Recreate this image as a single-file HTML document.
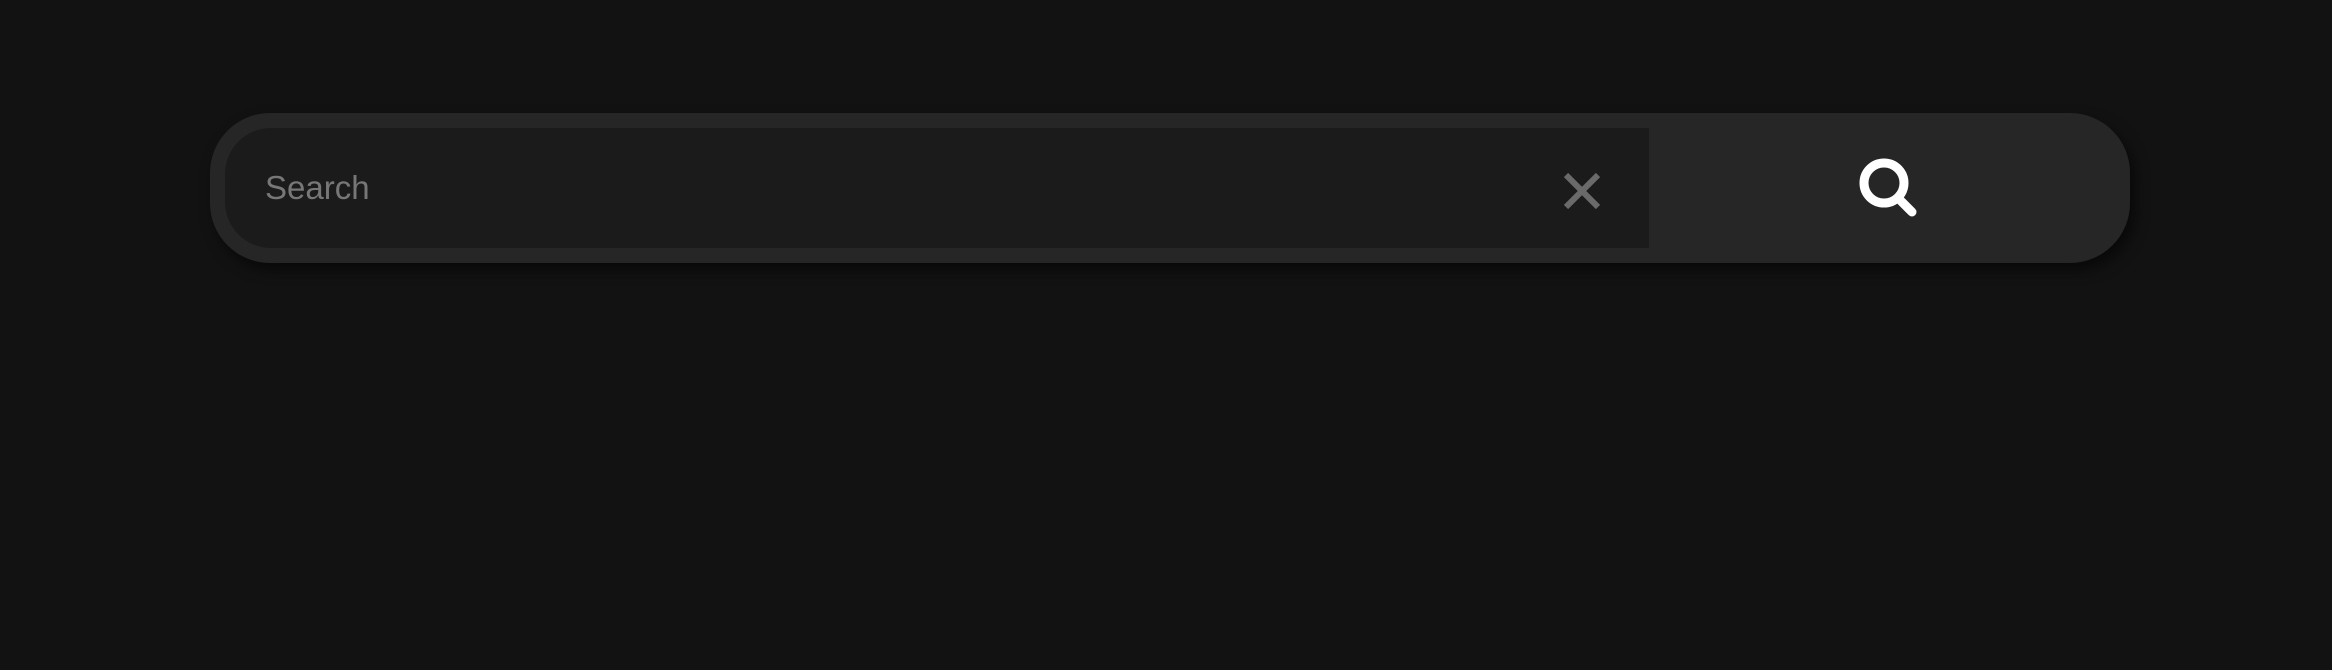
<!DOCTYPE html>
<html><head><style>
html,body{margin:0;padding:0;width:2332px;height:670px;background:#121212;overflow:hidden}
.outer{position:absolute;left:210px;top:113px;width:1920px;height:150px;background:#262626;border-radius:60px;box-shadow:5px 7px 14px rgba(0,0,0,0.55)}
.inner{position:absolute;left:15px;top:15px;width:1424px;height:120px;background:#1b1b1b;border-radius:46px 0 0 46px}
.txt{position:absolute;left:40px;top:0;font-family:"Liberation Sans",sans-serif;font-size:33px;line-height:120px;color:#777;}
svg{position:absolute}
</style></head><body>
<div class="outer">
 <div class="inner"><div class="txt">Search</div></div>
</div>
<svg style="left:1564px;top:173px" width="36" height="36" viewBox="0 0 36 36">
<path d="M2 2L34 34M34 2L2 34" stroke="#6a6a6a" stroke-width="6"/>
</svg>
<svg style="left:1844px;top:143px" width="90" height="90" viewBox="0 0 90 90">
<circle cx="40" cy="40" r="20" stroke="#fff" stroke-width="9" fill="none"/>
<path d="M55 56L68 69" stroke="#fff" stroke-width="9" stroke-linecap="round"/>
</svg>
</body></html>
